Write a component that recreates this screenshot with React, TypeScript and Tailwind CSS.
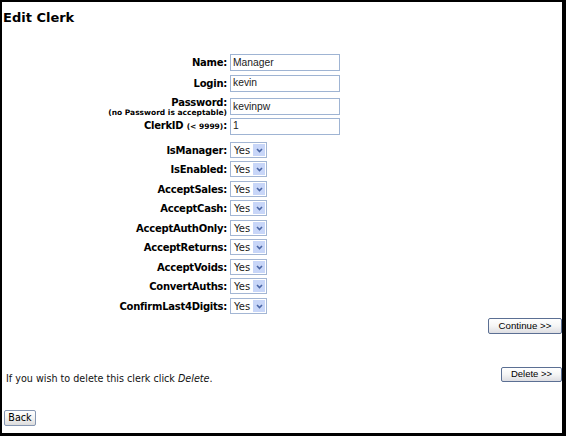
import React from "react";

const labelFont = { fontFamily: '"DejaVu Sans", Verdana, sans-serif' };

function TextBox({ value }: { value: string }) {
  return (
    <div
      className="flex h-[17px] w-[110px] items-center border border-[#9fb4d3] bg-white pl-[2px] text-[10.3px] text-[#222]"
      style={{ fontFamily: '"Liberation Sans", Arial, sans-serif' }}
    >
      {value}
    </div>
  );
}

function YesSelect() {
  return (
    <div className="flex h-[16px] w-[37px] items-stretch border border-[#a3b6d4] bg-white">
      <span className="flex flex-1 items-center pl-[3px] text-[10px] text-[#222]" style={labelFont}>
        Yes
      </span>
      <span className="m-[1px] flex w-[12px] items-center justify-center bg-[#c8d6f8]">
        <svg width="7" height="5" viewBox="0 0 7 5">
          <path d="M1 1l2.5 2.5L6 1" stroke="#4b67a6" strokeWidth="1.6" fill="none" />
        </svg>
      </span>
    </div>
  );
}

function Row({
  label,
  children,
  className,
}: {
  label: React.ReactNode;
  children: React.ReactNode;
  className: string;
}) {
  return (
    <div className={`flex items-center ${className}`}>
      <div
        className="w-[225px] text-right text-[10px] font-bold leading-[11px] tracking-[-0.25px] text-black"
        style={labelFont}
      >
        {label}
      </div>
      <div className="ml-[3px]">{children}</div>
    </div>
  );
}

const selects = [
  ["IsManager", "mt-[8px]"],
  ["IsEnabled", "mt-[3px]"],
  ["AcceptSales", "mt-[4px]"],
  ["AcceptCash", "mt-[3px]"],
  ["AcceptAuthOnly", "mt-[4px]"],
  ["AcceptReturns", "mt-[3px]"],
  ["AcceptVoids", "mt-[4px]"],
  ["ConvertAuths", "mt-[3px]"],
  ["ConfirmLast4Digits", "mt-[4px]"],
];

const btn =
  "flex items-center justify-center rounded-[2px] border border-[#5b6f93] bg-linear-to-b from-white via-[#f5f5f5] to-[#dedee2] text-black";

export default function App() {
  return (
    <div className="h-[436px] w-[566px] bg-white">
      <div className="box-border flex h-[436px] w-[566px] flex-col border-t-2 border-r-4 border-b-[3px] border-l-2 border-black">
        <div className="mt-[8px] pl-[1px] text-[13px] font-bold leading-[16px] text-black" style={labelFont}>
          Edit Clerk
        </div>

        <div className="mt-[28px] flex flex-col">
          <Row label="Name:" className="h-[17px]">
            <TextBox value="Manager" />
          </Row>
          <Row label="Login:" className="mt-[4px] h-[16px]">
            <TextBox value="kevin" />
          </Row>
          <Row
            label={
              <div className="flex flex-col items-end">
                <span>Password:</span>
                <span className="text-[7.5px] leading-[9px] tracking-normal">(no Password is acceptable)</span>
              </div>
            }
            className="mt-[5px] h-[21px]"
          >
            <TextBox value="kevinpw" />
          </Row>
          <Row
            label={
              <span>
                ClerkID <span className="text-[7.5px] tracking-normal">(&lt; 9999)</span>:
              </span>
            }
            className="mt-[1px] h-[16px]"
          >
            <TextBox value="1" />
          </Row>
          {selects.map(([name, mt]) => (
            <Row key={name} label={`${name}:`} className={`${mt} h-[16px]`}>
              <YesSelect />
            </Row>
          ))}
        </div>

        <div className="mt-[4px] flex justify-end">
          <button
            className={`${btn} h-[16px] w-[74px] text-[9.7px]`}
            style={{ fontFamily: '"Liberation Sans", Arial, sans-serif' }}
          >
            Continue &gt;&gt;
          </button>
        </div>

        <div className="mt-[33px] flex h-[18px] items-start justify-between">
          <div className="pl-[4px] pt-[6px] text-[9.6px] leading-[12px] text-[#111]" style={labelFont}>
            If you wish to delete this clerk click <i>Delete</i>.
          </div>
          <button
            className={`${btn} h-[15px] w-[61px] text-[9.5px]`}
            style={{ fontFamily: '"Liberation Sans", Arial, sans-serif' }}
          >
            Delete &gt;&gt;
          </button>
        </div>

        <div className="mt-[25px] ml-[2px] flex">
          <button
            className="flex h-[16px] w-[32px] items-center justify-center rounded-[2px] border border-[#8596b2] bg-linear-to-b from-white via-[#f3f3f3] to-[#dcdcdc] text-[9.6px] text-black"
            style={labelFont}
          >
            Back
          </button>
        </div>
      </div>
    </div>
  );
}
